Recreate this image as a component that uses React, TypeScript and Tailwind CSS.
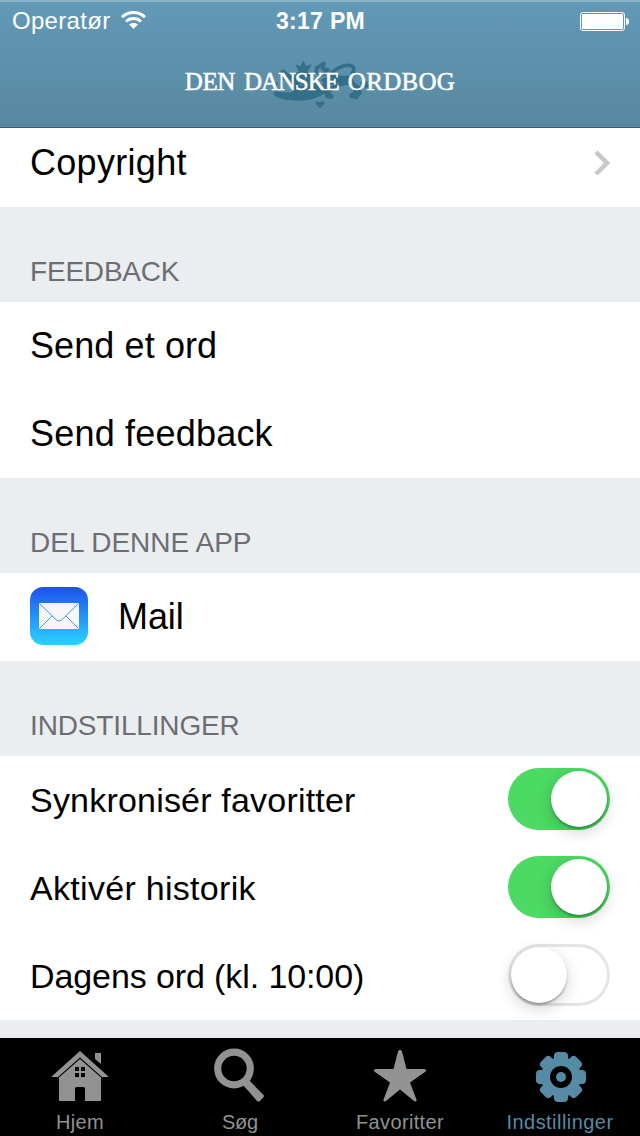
import type { ReactNode } from "react";

type RowProps = {
  label: string;
  large?: boolean;
  spacing?: string;
  icon?: ReactNode;
  children?: ReactNode;
};

function Row({ label, large, spacing = "", icon, children }: RowProps) {
  return (
    <div className="flex h-22 items-center bg-white px-[30px] text-black">
      {icon}
      <span
        className={`flex-1 whitespace-nowrap ${large ? "text-[36px]" : "text-[34px]"} ${spacing}`}
      >
        {label}
      </span>
      {children}
    </div>
  );
}

function SectionHeader({ title, spacing }: { title: string; spacing: string }) {
  return (
    <h2
      className={`flex h-[95px] items-end px-[30px] pb-[14px] text-[28px] leading-8 text-[#6d6d72] ${spacing}`}
    >
      {title}
    </h2>
  );
}

function Switch({ on }: { on: boolean }) {
  return (
    <div
      className={`-mt-0.5 flex h-[62px] w-[102px] items-center rounded-full px-[3px] ${
        on
          ? "justify-end bg-[#4cd964]"
          : "justify-start bg-white ring-3 ring-[#e5e5e5] ring-inset"
      }`}
    >
      <div className="size-14 rounded-full bg-white shadow-[0_2px_2px_rgba(0,0,0,0.28),0_5px_16px_rgba(0,0,0,0.18)]" />
    </div>
  );
}

function MailIcon() {
  return (
    <svg className="-mt-0.5 mr-[30px] size-[58px]" viewBox="0 0 58 58">
      <defs>
        <linearGradient id="mail" x1="0" y1="0" x2="0" y2="1">
          <stop offset="0" stopColor="#1e51ee" />
          <stop offset="1" stopColor="#2bd3fe" />
        </linearGradient>
      </defs>
      <rect width="58" height="58" rx="13" fill="url(#mail)" />
      <rect x="9" y="16" width="40" height="26" rx="1" fill="#f7f7f7" />
      <path
        d="M9.5 16.5 26.5 33q2.5 2.5 5 0L48.5 16.5M9.5 41.5 22 29M48.5 41.5 36 29"
        fill="none"
        stroke="#3f97ec"
        strokeWidth="1"
      />
    </svg>
  );
}

function StatusBar() {
  return (
    <div className="grid h-9 grid-cols-3 items-center pt-0.5 pr-[11px] pl-3 text-[23px] leading-none">
      <div className="flex items-center gap-[11px]">
        <span className="text-[24px] tracking-[0.3px]">Operatør</span>
        <svg className="-mt-0.5 h-[18px] w-[25px]" viewBox="0 0 25 18">
          <path
            d="M1 6.2a16.5 16.5 0 0 1 23 0M5 10.5a10.8 10.8 0 0 1 15 0"
            fill="none"
            stroke="white"
            strokeWidth="3"
          />
          <path d="M8.1 13.5a6.3 6.3 0 0 1 8.8 0L12.5 18Z" fill="white" />
        </svg>
      </div>
      <span className="text-center font-bold tracking-[0.3px]">3:17 PM</span>
      <svg className="h-[19px] w-[49px] justify-self-end" viewBox="0 0 49 19">
        <rect x="0.5" y="0.5" width="44" height="18" rx="2.5" fill="none" stroke="white" />
        <rect x="2" y="2" width="41" height="15" rx="1" fill="white" />
        <path d="M46 6q3 0 3 3.5T46 13Z" fill="white" />
      </svg>
    </div>
  );
}

// Heraldic lion behind the wordmark
function Lion() {
  return (
    <svg
      className="absolute top-[14px] left-[260px] h-[62px] w-[120px]"
      viewBox="0 0 360 186"
      fill="#346f89"
    >
      {/* crown and head */}
      <path d="M116 58 106 37 121 43 130 26 139 43 155 37 144 58Z" />
      <path d="M108 62Q130 50 152 62L162 84 156 108H106L98 84Z" />
      {/* raised paw */}
      <path d="M62 56Q72 48 80 60L104 78 108 100 88 98 76 84 62 80Z" />
      <path d="M32 86Q42 82 42 90L54 94 50 102 34 96Z" />
      {/* chest and lower foreleg */}
      <path d="M100 92 160 82 184 96 214 92 206 110Q184 142 120 146 74 146 48 134 34 126 46 118 72 122 96 120Z" />
      {/* body and hind legs */}
      <path d="M182 84 212 66Q246 74 272 70L284 92 302 104 306 122 292 142 270 138 268 128 282 116 262 98 226 108 212 122 222 132 216 142 198 138 192 124 202 106Z" />
      <path d="m304 86 18 4 6 12-10 8-8-10-10-4Z" />
      {/* tail */}
      <path
        d="M212 64Q244 38 268 40 292 44 274 68M168 66 170 48Q178 42 192 34L188 50 204 54 184 70"
        fill="none"
        stroke="#346f89"
        strokeWidth="11"
        strokeLinejoin="round"
      />
      <path d="M180 168Q164 156 167 150 174 145 180 152 186 145 193 150 196 156 180 168Z" />
      <path
        d="M114 74l10 8m18-12-8 14m-18 12 14 6m-34-22-8 14m118 8 30-8m12 12 26-4"
        fill="none"
        stroke="#5d91ae"
        strokeWidth="3"
      />
    </svg>
  );
}

const tabs = [
  {
    label: "Hjem",
    spacing: "tracking-[0.3px]",
    icon: (
      <>
        <path d="M29 1 58 27h-7L29 7.5 7 27H0Z" />
        <path d="M29 9 50 27.5V51H34V38.5q0-1.5-1.5-1.5h-7q-1.5 0-1.5 1.5V51H8V27.5ZM24 17v4h4v-4Zm6 0v4h4v-4Zm-6 6v4h4v-4Zm6 0v4h4v-4Z" />
        <path d="M44 3h6v11l-6-5Z" />
      </>
    ),
  },
  {
    label: "Søg",
    spacing: "tracking-[-0.2px]",
    icon: (
      <>
        <circle cx="23" cy="18.5" r="16.3" fill="none" stroke="currentColor" strokeWidth="7.2" />
        <path d="m32 35 6-5 14.5 15q1 1 0 2l-3.5 4q-1.5 1-3 0Z" />
      </>
    ),
  },
  {
    label: "Favoritter",
    spacing: "tracking-[0.35px]",
    icon: (
      <path d="M27 1.5q2-3.5 4 0L35.5 19H53q4 .5 1 3L39 32.5l6.5 17q.5 3-2.5 1.5L29 39.5 15 51q-3 1.5-2.5-1.5L19 32.5 4 22q-3-2.5 1-3h17.5Z" />
    ),
  },
  {
    label: "Indstillinger",
    spacing: "tracking-[0.45px]",
    icon: (
      <>
        {[0, 45, 90, 135].map((angle) => (
          <rect
            key={angle}
            x="23"
            y="2"
            width="14"
            height="50"
            rx="4"
            transform={`rotate(${angle} 30 27)`}
          />
        ))}
        <circle cx="30" cy="27" r="20" />
        <circle cx="30" cy="27" r="11" fill="black" />
        <circle cx="30" cy="27" r="5" />
      </>
    ),
  },
];

export default function App() {
  return (
    <div className="flex h-[1136px] w-[640px] flex-col overflow-hidden bg-[#eaeef1] font-['Liberation_Sans',sans-serif]">
      <header className="z-10 h-32 shrink-0 border-t-2 border-b border-t-[#8ab2c8] border-b-[#315e76] bg-linear-to-b from-[#6299b8] to-[#58889f] text-white">
        <StatusBar />
        <div className="relative h-20">
          <Lion />
          <h1 className="relative flex justify-center gap-[9px] pt-[30px] font-['Liberation_Serif',serif] text-[25px] leading-7 whitespace-nowrap [-webkit-text-stroke:0.5px_white]">
            <span className="tracking-[-0.4px]">DEN</span>
            <span className="tracking-[-1.1px]">DANSKE</span>
            <span className="tracking-[0.3px]">ORDBOG</span>
          </h1>
        </div>
      </header>

      <main className="-mt-[9px] flex-1">
        <Row label="Copyright" large spacing="tracking-[0.3px]">
          <svg className="h-[26px] w-4" viewBox="0 0 16 26">
            <path d="M2 2 13 13 2 24" fill="none" stroke="#c7c7cc" strokeWidth="4.5" />
          </svg>
        </Row>

        <SectionHeader title="FEEDBACK" spacing="tracking-[-0.2px]" />
        <Row label="Send et ord" large spacing="tracking-[0.1px]" />
        <Row label="Send feedback" large spacing="tracking-[0.2px]" />

        <SectionHeader title="DEL DENNE APP" spacing="" />
        <Row label="Mail" large spacing="tracking-[-0.1px]" icon={<MailIcon />} />

        <SectionHeader title="INDSTILLINGER" spacing="tracking-[-0.15px]" />
        <Row label="Synkronisér favoritter" spacing="tracking-[0.2px]">
          <Switch on />
        </Row>
        <Row label="Aktivér historik" spacing="tracking-[0.3px]">
          <Switch on />
        </Row>
        <Row label="Dagens ord (kl. 10:00)" spacing="tracking-[-0.1px]">
          <Switch on={false} />
        </Row>
      </main>

      <nav className="z-10 grid h-[98px] shrink-0 grid-cols-4 bg-black">
        {tabs.map((tab) => (
          <div
            key={tab.label}
            className={`flex flex-col items-center pt-3 ${
              tab.label === "Indstillinger" ? "text-[#568ba6]" : "text-[#929292]"
            }`}
          >
            <svg className="h-[54px] w-[58px] overflow-visible" viewBox="0 0 58 54" fill="currentColor">
              {tab.icon}
            </svg>
            <span className={`mt-1.5 text-[20px] leading-6 ${tab.spacing}`}>{tab.label}</span>
          </div>
        ))}
      </nav>
    </div>
  );
}
